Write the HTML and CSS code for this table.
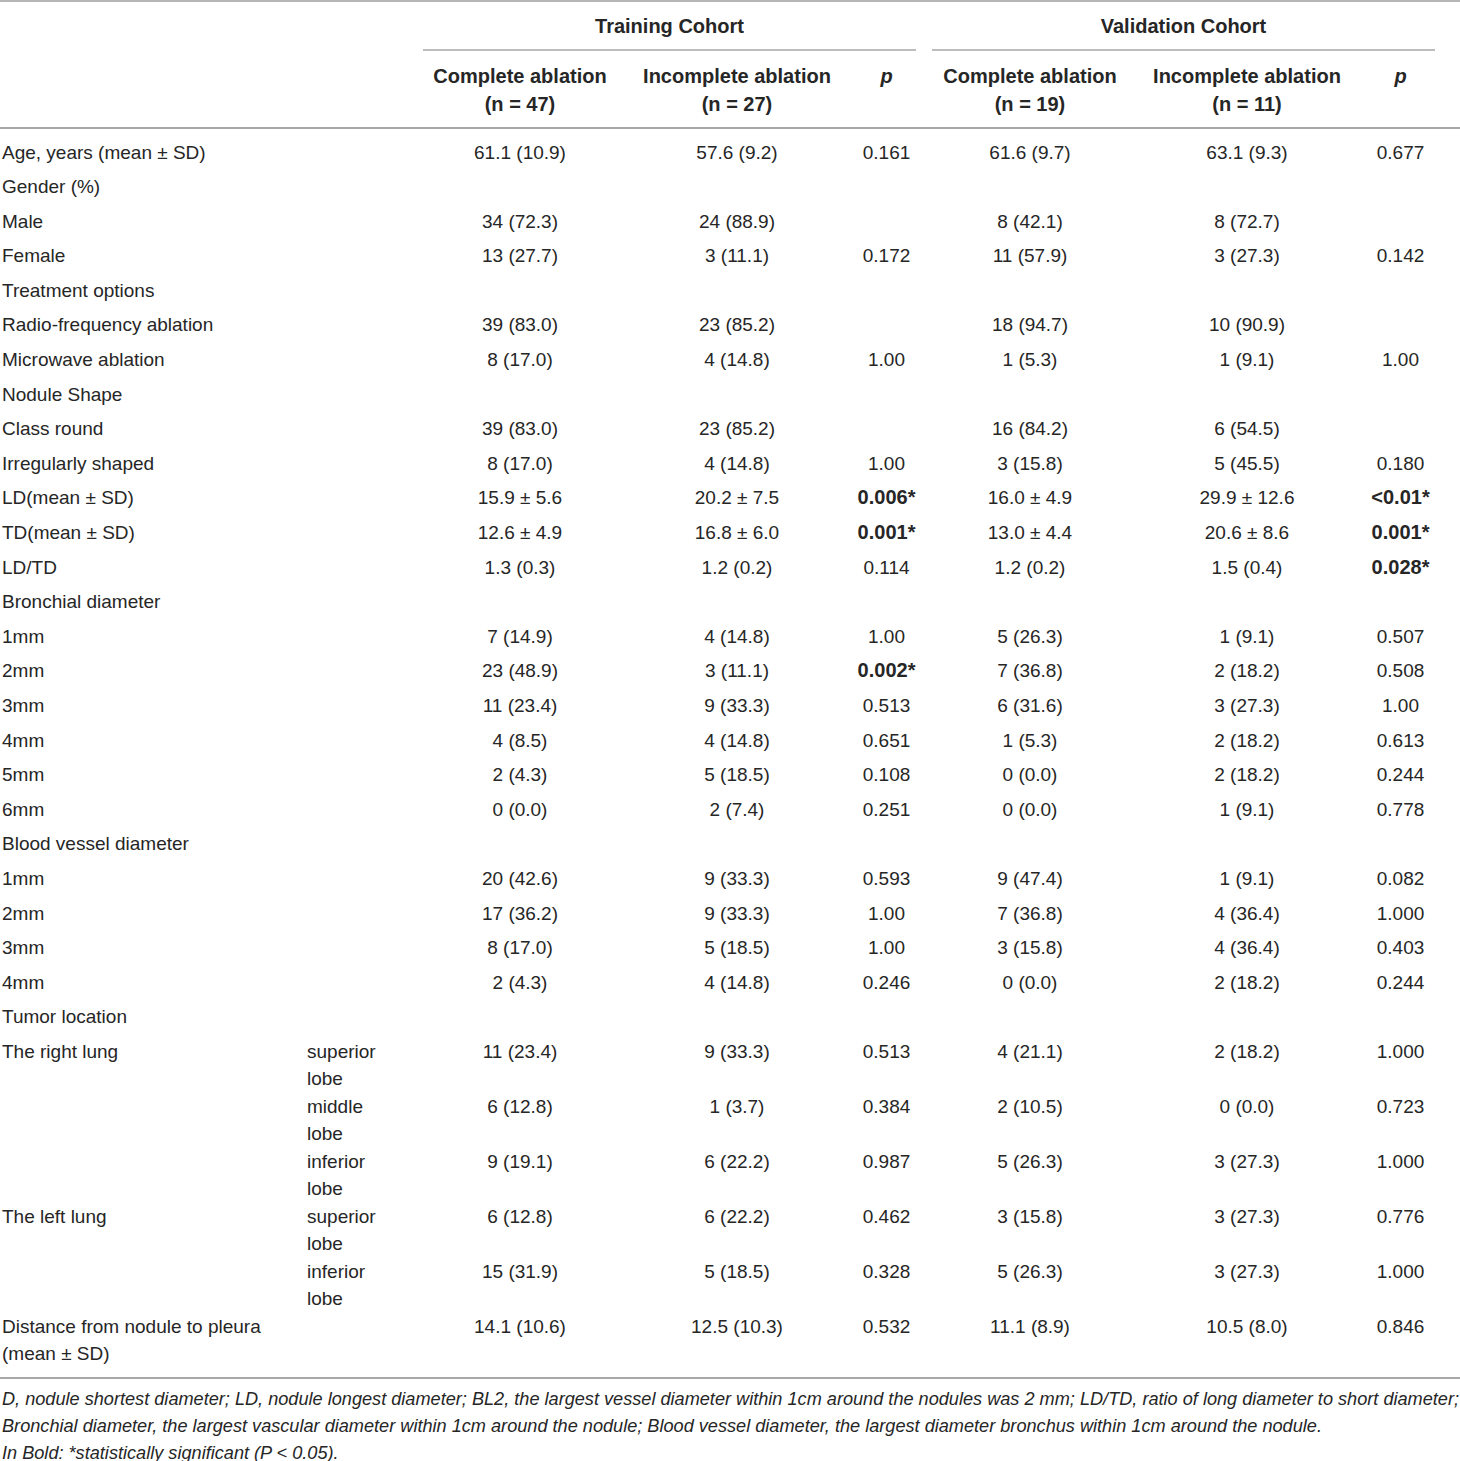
FILE: index.html
```html
<!DOCTYPE html>
<html lang="en">
<head>
<meta charset="utf-8">
<title>Table</title>
<link rel="stylesheet" href="styles.css">
</head>
<body>
<div class="table">
  <div class="head">
    <div class="hrow hrow1">
      <div class="cohort c-train"><span>Training Cohort</span></div>
      <div class="cohort c-valid"><span>Validation Cohort</span></div>
    </div>
    <div class="hrow hrow2">
      <div class="hc col3">Complete ablation<br>(n = 47)</div>
      <div class="hc">Incomplete ablation<br>(n = 27)</div>
      <div class="hc"><i>p</i></div>
      <div class="hc">Complete ablation<br>(n = 19)</div>
      <div class="hc">Incomplete ablation<br>(n = 11)</div>
      <div class="hc"><i>p</i></div>
    </div>
  </div>

  <div class="body">
    <div class="row"><div class="lab">Age, years (mean ± SD)</div><div></div><div class="v">61.1 (10.9)</div><div class="v">57.6 (9.2)</div><div class="v">0.161</div><div class="v">61.6 (9.7)</div><div class="v">63.1 (9.3)</div><div class="v">0.677</div></div>
    <div class="row"><div class="lab">Gender (%)</div></div>
    <div class="row"><div class="lab">Male</div><div></div><div class="v">34 (72.3)</div><div class="v">24 (88.9)</div><div class="v"></div><div class="v">8 (42.1)</div><div class="v">8 (72.7)</div><div class="v"></div></div>
    <div class="row"><div class="lab">Female</div><div></div><div class="v">13 (27.7)</div><div class="v">3 (11.1)</div><div class="v">0.172</div><div class="v">11 (57.9)</div><div class="v">3 (27.3)</div><div class="v">0.142</div></div>
    <div class="row"><div class="lab">Treatment options</div></div>
    <div class="row"><div class="lab">Radio-frequency ablation</div><div></div><div class="v">39 (83.0)</div><div class="v">23 (85.2)</div><div class="v"></div><div class="v">18 (94.7)</div><div class="v">10 (90.9)</div><div class="v"></div></div>
    <div class="row"><div class="lab">Microwave ablation</div><div></div><div class="v">8 (17.0)</div><div class="v">4 (14.8)</div><div class="v">1.00</div><div class="v">1 (5.3)</div><div class="v">1 (9.1)</div><div class="v">1.00</div></div>
    <div class="row"><div class="lab">Nodule Shape</div></div>
    <div class="row"><div class="lab">Class round</div><div></div><div class="v">39 (83.0)</div><div class="v">23 (85.2)</div><div class="v"></div><div class="v">16 (84.2)</div><div class="v">6 (54.5)</div><div class="v"></div></div>
    <div class="row"><div class="lab">Irregularly shaped</div><div></div><div class="v">8 (17.0)</div><div class="v">4 (14.8)</div><div class="v">1.00</div><div class="v">3 (15.8)</div><div class="v">5 (45.5)</div><div class="v">0.180</div></div>
    <div class="row"><div class="lab">LD(mean ± SD)</div><div></div><div class="v">15.9 ± 5.6</div><div class="v">20.2 ± 7.5</div><div class="v b">0.006*</div><div class="v">16.0 ± 4.9</div><div class="v">29.9 ± 12.6</div><div class="v b">&lt;0.01*</div></div>
    <div class="row"><div class="lab">TD(mean ± SD)</div><div></div><div class="v">12.6 ± 4.9</div><div class="v">16.8 ± 6.0</div><div class="v b">0.001*</div><div class="v">13.0 ± 4.4</div><div class="v">20.6 ± 8.6</div><div class="v b">0.001*</div></div>
    <div class="row"><div class="lab">LD/TD</div><div></div><div class="v">1.3 (0.3)</div><div class="v">1.2 (0.2)</div><div class="v">0.114</div><div class="v">1.2 (0.2)</div><div class="v">1.5 (0.4)</div><div class="v b">0.028*</div></div>
    <div class="row"><div class="lab">Bronchial diameter</div></div>
    <div class="row"><div class="lab">1mm</div><div></div><div class="v">7 (14.9)</div><div class="v">4 (14.8)</div><div class="v">1.00</div><div class="v">5 (26.3)</div><div class="v">1 (9.1)</div><div class="v">0.507</div></div>
    <div class="row"><div class="lab">2mm</div><div></div><div class="v">23 (48.9)</div><div class="v">3 (11.1)</div><div class="v b">0.002*</div><div class="v">7 (36.8)</div><div class="v">2 (18.2)</div><div class="v">0.508</div></div>
    <div class="row"><div class="lab">3mm</div><div></div><div class="v">11 (23.4)</div><div class="v">9 (33.3)</div><div class="v">0.513</div><div class="v">6 (31.6)</div><div class="v">3 (27.3)</div><div class="v">1.00</div></div>
    <div class="row"><div class="lab">4mm</div><div></div><div class="v">4 (8.5)</div><div class="v">4 (14.8)</div><div class="v">0.651</div><div class="v">1 (5.3)</div><div class="v">2 (18.2)</div><div class="v">0.613</div></div>
    <div class="row"><div class="lab">5mm</div><div></div><div class="v">2 (4.3)</div><div class="v">5 (18.5)</div><div class="v">0.108</div><div class="v">0 (0.0)</div><div class="v">2 (18.2)</div><div class="v">0.244</div></div>
    <div class="row"><div class="lab">6mm</div><div></div><div class="v">0 (0.0)</div><div class="v">2 (7.4)</div><div class="v">0.251</div><div class="v">0 (0.0)</div><div class="v">1 (9.1)</div><div class="v">0.778</div></div>
    <div class="row"><div class="lab">Blood vessel diameter</div></div>
    <div class="row"><div class="lab">1mm</div><div></div><div class="v">20 (42.6)</div><div class="v">9 (33.3)</div><div class="v">0.593</div><div class="v">9 (47.4)</div><div class="v">1 (9.1)</div><div class="v">0.082</div></div>
    <div class="row"><div class="lab">2mm</div><div></div><div class="v">17 (36.2)</div><div class="v">9 (33.3)</div><div class="v">1.00</div><div class="v">7 (36.8)</div><div class="v">4 (36.4)</div><div class="v">1.000</div></div>
    <div class="row"><div class="lab">3mm</div><div></div><div class="v">8 (17.0)</div><div class="v">5 (18.5)</div><div class="v">1.00</div><div class="v">3 (15.8)</div><div class="v">4 (36.4)</div><div class="v">0.403</div></div>
    <div class="row"><div class="lab">4mm</div><div></div><div class="v">2 (4.3)</div><div class="v">4 (14.8)</div><div class="v">0.246</div><div class="v">0 (0.0)</div><div class="v">2 (18.2)</div><div class="v">0.244</div></div>
    <div class="row"><div class="lab">Tumor location</div></div>
    <div class="row row2"><div class="lab">The right lung</div><div class="sub">superior<br>lobe</div><div class="v">11 (23.4)</div><div class="v">9 (33.3)</div><div class="v">0.513</div><div class="v">4 (21.1)</div><div class="v">2 (18.2)</div><div class="v">1.000</div></div>
    <div class="row row2"><div class="lab"></div><div class="sub">middle<br>lobe</div><div class="v">6 (12.8)</div><div class="v">1 (3.7)</div><div class="v">0.384</div><div class="v">2 (10.5)</div><div class="v">0 (0.0)</div><div class="v">0.723</div></div>
    <div class="row row2"><div class="lab"></div><div class="sub">inferior<br>lobe</div><div class="v">9 (19.1)</div><div class="v">6 (22.2)</div><div class="v">0.987</div><div class="v">5 (26.3)</div><div class="v">3 (27.3)</div><div class="v">1.000</div></div>
    <div class="row row2"><div class="lab">The left lung</div><div class="sub">superior<br>lobe</div><div class="v">6 (12.8)</div><div class="v">6 (22.2)</div><div class="v">0.462</div><div class="v">3 (15.8)</div><div class="v">3 (27.3)</div><div class="v">0.776</div></div>
    <div class="row row2"><div class="lab"></div><div class="sub">inferior<br>lobe</div><div class="v">15 (31.9)</div><div class="v">5 (18.5)</div><div class="v">0.328</div><div class="v">5 (26.3)</div><div class="v">3 (27.3)</div><div class="v">1.000</div></div>
    <div class="row row-last"><div class="lab">Distance from nodule to pleura<br>(mean ± SD)</div><div></div><div class="v">14.1 (10.6)</div><div class="v">12.5 (10.3)</div><div class="v">0.532</div><div class="v">11.1 (8.9)</div><div class="v">10.5 (8.0)</div><div class="v">0.846</div></div>
  </div>

  <div class="foot">
    D, nodule shortest diameter; LD, nodule longest diameter; BL2, the largest vessel diameter within 1cm around the nodules was 2 mm; LD/TD, ratio of long diameter to short diameter;<br>
    Bronchial diameter, the largest vascular diameter within 1cm around the nodule; Blood vessel diameter, the largest diameter bronchus within 1cm around the nodule.<br>
    In Bold: *statistically significant (P &lt; 0.05).
  </div>
</div>
</body>
</html>
```

FILE: styles.css
```css
html, body {
  margin: 0;
  padding: 0;
  background: #ffffff;
}

body {
  font-family: "Liberation Sans", Arial, Helvetica, sans-serif;
  font-size: 19px;
  color: #262626;
}

.table {
  width: 1460px;
}

.head {
  border-top: 2px solid #b5b5b5;
  border-bottom: 2px solid #a8a8a8;
}

.hrow,
.row {
  display: grid;
  grid-template-columns: 305px 110px 210px 224px 75px 212px 222px 85px 17px;
}

.hrow1 {
  padding-top: 10px;
  font-weight: bold;
  font-size: 20px;
  line-height: 28px;
}

.cohort {
  padding: 0 8px;
  text-align: center;
}

.cohort span {
  display: block;
  padding-bottom: 9px;
  border-bottom: 2px solid #bdbdbd;
}

.c-train {
  grid-column: 3 / 6;
}

.c-valid {
  grid-column: 6 / 9;
}

.hrow2 {
  padding-top: 11px;
  padding-bottom: 9px;
  font-weight: bold;
  font-size: 20px;
  line-height: 28px;
}

.hc {
  text-align: center;
  white-space: nowrap;
}

.col3 {
  grid-column: 3;
}

.body {
  padding-top: 6px;
  border-bottom: 2px solid #a8a8a8;
}

.row {
  box-sizing: border-box;
  height: 34.6px;
  padding-top: 3.5px;
  line-height: 27.5px;
}

.row2 {
  height: 55px;
}

.row-last {
  height: 67.2px;
}

.lab,
.sub {
  padding-left: 2px;
  white-space: nowrap;
}

.v {
  text-align: center;
  white-space: nowrap;
}

.b {
  font-weight: bold;
  font-size: 20px;
}

.foot {
  padding-top: 7px;
  padding-left: 2px;
  font-style: italic;
  font-size: 18.15px;
  line-height: 27px;
  white-space: nowrap;
}
```
